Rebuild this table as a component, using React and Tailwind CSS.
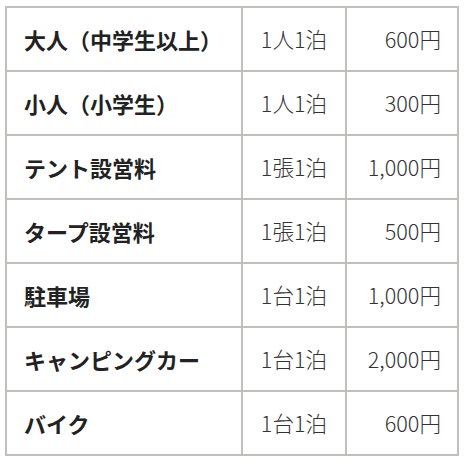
const rows = [
  { name: "大人（中学生以上）", unit: "1人1泊", price: "600円" },
  { name: "小人（小学生）", unit: "1人1泊", price: "300円" },
  { name: "テント設営料", unit: "1張1泊", price: "1,000円" },
  { name: "タープ設営料", unit: "1張1泊", price: "500円" },
  { name: "駐車場", unit: "1台1泊", price: "1,000円" },
  { name: "キャンピングカー", unit: "1台1泊", price: "2,000円" },
  { name: "バイク", unit: "1台1泊", price: "600円" },
];

export default function App() {
  return (
    <div
      className="w-[466px] h-[466px] bg-white pt-[6px] pl-[5px]"
      style={{ fontFamily: '"Noto Sans CJK JP", "Noto Sans", sans-serif' }}
    >
      <div className="grid grid-cols-[236px_104px_112px] w-[454px] border-l-2 border-t-2 border-[#bfbfbc]">
        {rows.map((r) => (
          <div key={r.name} className="contents">
            <div className="h-[64px] flex items-center pl-[17px] border-r-2 border-b-2 border-[#bfbfbc] text-[22px] font-bold text-[#222]">
              {r.name}
            </div>
            <div className="h-[64px] flex items-center justify-center border-r-2 border-b-2 border-[#bfbfbc] text-[21.6px] font-light text-[#333]">
              {r.unit}
            </div>
            <div className="h-[64px] flex items-center justify-end pr-[16px] border-r-2 border-b-2 border-[#bfbfbc] text-[21.6px] font-light text-[#333]">
              {r.price}
            </div>
          </div>
        ))}
      </div>
    </div>
  );
}
